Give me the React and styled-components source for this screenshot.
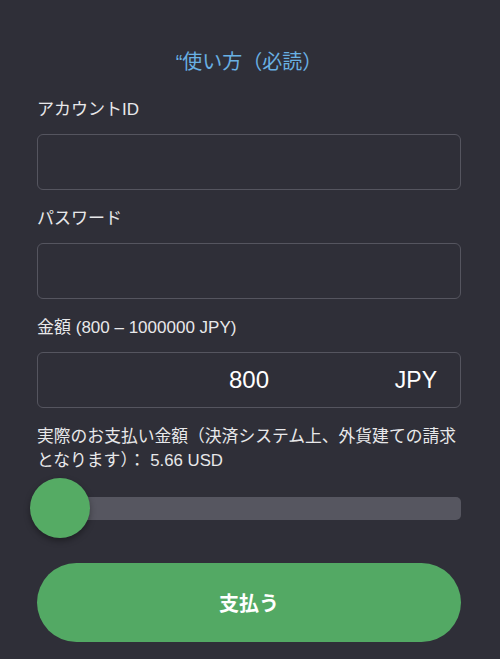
import React, { useState } from "react";
import styled, { createGlobalStyle } from "styled-components";

const GlobalStyle = createGlobalStyle`
    html, body {
        margin: 0;
        padding: 0;
        background: #2f2f38;
    }
    body {
        font-family: "Liberation Sans", "Noto Sans CJK JP", sans-serif;
        color: #e8e8ea;
    }
`;

const App = () => {
    const [amount] = useState(800);
    return (
        <>
            <GlobalStyle />
            <Page>
                <Guide href="#">“使い方（必読）</Guide>
                <Field>
                    <Label>アカウントID</Label>
                    <Box />
                </Field>
                <Field>
                    <Label>パスワード</Label>
                    <Box type="password" />
                </Field>
                <Field>
                    <Label>金額 (800 – 1000000 JPY)</Label>
                    <AmountBox>
                        <Amount>{amount}</Amount>
                        <Currency>JPY</Currency>
                    </AmountBox>
                </Field>
                <Note>
                    実際のお支払い金額（決済システム上、外貨建ての請求となります）： 5.66 USD
                </Note>
                <Slider>
                    <Track />
                    <Thumb />
                </Slider>
                <PayButton>支払う</PayButton>
            </Page>
        </>
    );
};

//Design
const Page = styled.div`
    display: flex;
    flex-direction: column;
    width: 500px;
    padding: 50px 39px 17px 37px;
    min-height: 659px;
    box-sizing: border-box;
`;
const Guide = styled.a`
    align-self: center;
    font-size: 20px;
    line-height: 24px;
    color: #69b0e3;
    text-decoration: none;
    margin-bottom: 24px;
`;
const Field = styled.div`
    display: flex;
    flex-direction: column;
    gap: 12px;
    margin-bottom: 17px;
`;
const Label = styled.label`
    font-size: 17px;
    line-height: 24px;
    color: #e8e8ea;
`;
const Box = styled.input`
    height: 56px;
    box-sizing: border-box;
    background: transparent;
    border: 1.5px solid #55555f;
    border-radius: 6px;
    color: #fff;
    font-size: 18px;
    padding: 0 14px;
    outline: none;
`;
const AmountBox = styled.div`
    position: relative;
    display: flex;
    align-items: center;
    justify-content: center;
    height: 56px;
    box-sizing: border-box;
    border: 1.5px solid #55555f;
    border-radius: 6px;
`;
const Amount = styled.span`
    font-size: 24px;
    color: #fff;
`;
const Currency = styled.span`
    position: absolute;
    right: 23px;
    font-size: 23px;
    color: #fff;
`;
const Note = styled.p`
    margin: 0;
    font-size: 16.8px;
    line-height: 24px;
    color: #e8e8ea;
`;
const Slider = styled.div`
    position: relative;
    display: flex;
    align-items: center;
    height: 60px;
    margin-top: 5px;
`;
const Track = styled.div`
    flex: 1;
    height: 23px;
    border-radius: 5px;
    background: #565660;
`;
const Thumb = styled.div`
    position: absolute;
    left: -7px;
    top: 0;
    width: 60px;
    height: 60px;
    border-radius: 50%;
    background: #55ab64;
    box-shadow: 0 3px 6px rgba(0, 0, 0, 0.35);
`;
const PayButton = styled.button`
    margin-top: 25px;
    height: 79px;
    border: none;
    border-radius: 40px;
    background: #53a964;
    color: #fff;
    font-family: "Liberation Sans", "Noto Sans CJK JP", sans-serif;
    font-size: 20px;
    font-weight: bold;
    cursor: pointer;
`;

export default App;
